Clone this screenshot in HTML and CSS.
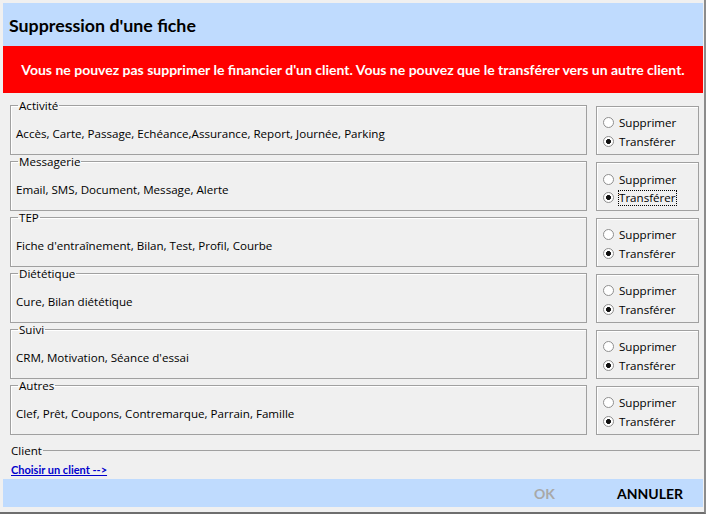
FILE: index.html
```html
<!DOCTYPE html>
<html lang="fr">
<head>
<meta charset="utf-8">
<title>Suppression d'une fiche</title>
<link rel="stylesheet" href="styles.css">
</head>
<body>
<div class="window">
  <header class="titlebar">Suppression d'une fiche</header>
  <div class="alert">Vous ne pouvez pas supprimer le financier d'un client. Vous ne pouvez que le transférer vers un autre client.</div>
  <main class="content">
    <div class="row">
      <fieldset class="group"><legend>Activité</legend><div class="items">Accès, Carte, Passage, Echéance,Assurance, Report, Journée, Parking</div></fieldset>
      <div class="choice">
        <label class="opt"><span class="radio"></span><span>Supprimer</span></label>
        <label class="opt"><span class="radio on"></span><span>Transférer</span></label>
      </div>
    </div>
    <div class="row">
      <fieldset class="group"><legend>Messagerie</legend><div class="items">Email, SMS, Document, Message, Alerte</div></fieldset>
      <div class="choice">
        <label class="opt"><span class="radio"></span><span>Supprimer</span></label>
        <label class="opt"><span class="radio on"></span><span class="focus">Transférer</span></label>
      </div>
    </div>
    <div class="row">
      <fieldset class="group"><legend>TEP</legend><div class="items">Fiche d'entraînement, Bilan, Test, Profil, Courbe</div></fieldset>
      <div class="choice">
        <label class="opt"><span class="radio"></span><span>Supprimer</span></label>
        <label class="opt"><span class="radio on"></span><span>Transférer</span></label>
      </div>
    </div>
    <div class="row">
      <fieldset class="group"><legend>Diététique</legend><div class="items">Cure, Bilan diététique</div></fieldset>
      <div class="choice">
        <label class="opt"><span class="radio"></span><span>Supprimer</span></label>
        <label class="opt"><span class="radio on"></span><span>Transférer</span></label>
      </div>
    </div>
    <div class="row">
      <fieldset class="group"><legend>Suivi</legend><div class="items">CRM, Motivation, Séance d'essai</div></fieldset>
      <div class="choice">
        <label class="opt"><span class="radio"></span><span>Supprimer</span></label>
        <label class="opt"><span class="radio on"></span><span>Transférer</span></label>
      </div>
    </div>
    <div class="row">
      <fieldset class="group"><legend>Autres</legend><div class="items">Clef, Prêt, Coupons, Contremarque, Parrain, Famille</div></fieldset>
      <div class="choice">
        <label class="opt"><span class="radio"></span><span>Supprimer</span></label>
        <label class="opt"><span class="radio on"></span><span>Transférer</span></label>
      </div>
    </div>
    <div class="client">
      <div class="client-head"><span>Client</span><span class="rule"></span></div>
      <a class="pick" href="#">Choisir un client --&gt;</a>
    </div>
  </main>
  <footer class="buttons">
    <span class="btn disabled">OK</span>
    <span class="btn">ANNULER</span>
  </footer>
</div>
</body>
</html>
```
FILE: styles.css
```css
html, body {
  margin: 0;
  padding: 0;
  background: #f0f0f0;
}
.window {
  width: 706px;
  height: 514px;
  box-sizing: border-box;
  padding: 3px 1px 3px 3px;
  border-right: 2px solid #8c8c8c;
  border-bottom: 2px solid #6e6e6e;
  display: flex;
  flex-direction: column;
  font-family: "Open Sans", "DejaVu Sans", sans-serif;
  color: #000;
}
.titlebar {
  height: 43px;
  background: #bfdbfe;
  font-family: Lato, "Open Sans", sans-serif;
  font-weight: bold;
  font-size: 17.8px;
  line-height: 44px;
  padding-left: 6px;
}
.alert {
  height: 47px;
  background: #ff0000;
  color: #fff;
  font-family: Lato, "Open Sans", sans-serif;
  font-weight: bold;
  font-size: 14px;
  line-height: 47px;
  text-align: center;
}
.content {
  flex: 1;
  padding: 6px 4px 0 7px;
  display: flex;
  flex-direction: column;
}
.row {
  display: flex;
  gap: 9px;
  height: 56px;
  flex: none;
}
.group {
  flex: 1;
  margin: 0;
  padding: 0 5px;
  border: 1px solid #a0a0a0;
  box-shadow: inset 1px 1px 0 #fff;
  min-width: 0;
}
.group legend {
  font-size: 11.6px;
  padding: 0 1px;
  margin-left: 2px;
  line-height: 13px;
}
.items {
  font-size: 11.6px;
  padding-top: 14px;
  white-space: nowrap;
}
.choice {
  width: 103px;
  height: 49px;
  margin-top: 7px;
  border: 1px solid #a0a0a0;
  box-shadow: inset 1px 1px 0 #fff;
  display: flex;
  flex-direction: column;
  justify-content: center;
  gap: 3px;
  padding-left: 6px;
  padding-top: 3px;
  box-sizing: border-box;
}
.opt {
  display: flex;
  align-items: center;
  gap: 5px;
  font-size: 11.6px;
  line-height: 16px;
}
.radio {
  width: 11px;
  height: 11px;
  box-sizing: border-box;
  border-radius: 50%;
  border: 1px solid #8f8f8f;
  background: #fff;
  display: inline-block;
}
.radio.on {
  background: radial-gradient(circle, #111 0 2.2px, #fff 2.6px);
}
.focus {
  outline: 1px dotted #000;
  outline-offset: 0;
  line-height: 14px;
}
.client {
  margin-top: 9px;
  padding-left: 1px;
}
.client-head {
  display: flex;
  align-items: center;
  font-size: 11.6px;
  line-height: 13px;
}
.rule {
  flex: 1;
  border-top: 1px solid #a0a0a0;
  margin-left: 1px;
  margin-right: -1px;
}
.pick {
  display: inline-block;
  margin-top: 2px;
  line-height: 14px;
  color: #0000cc;
  font-family: Lato, "Open Sans", sans-serif;
  font-weight: bold;
  font-size: 11px;
}
.buttons {
  height: 28px;
  margin-bottom: 2px;
  background: #bfdbfe;
  display: flex;
  justify-content: flex-end;
  align-items: center;
  padding-right: 20px;
  gap: 62px;
  font-family: Lato, "Open Sans", sans-serif;
  font-weight: bold;
  font-size: 14px;
}
.btn.disabled {
  color: #a8a8a8;
}
```
